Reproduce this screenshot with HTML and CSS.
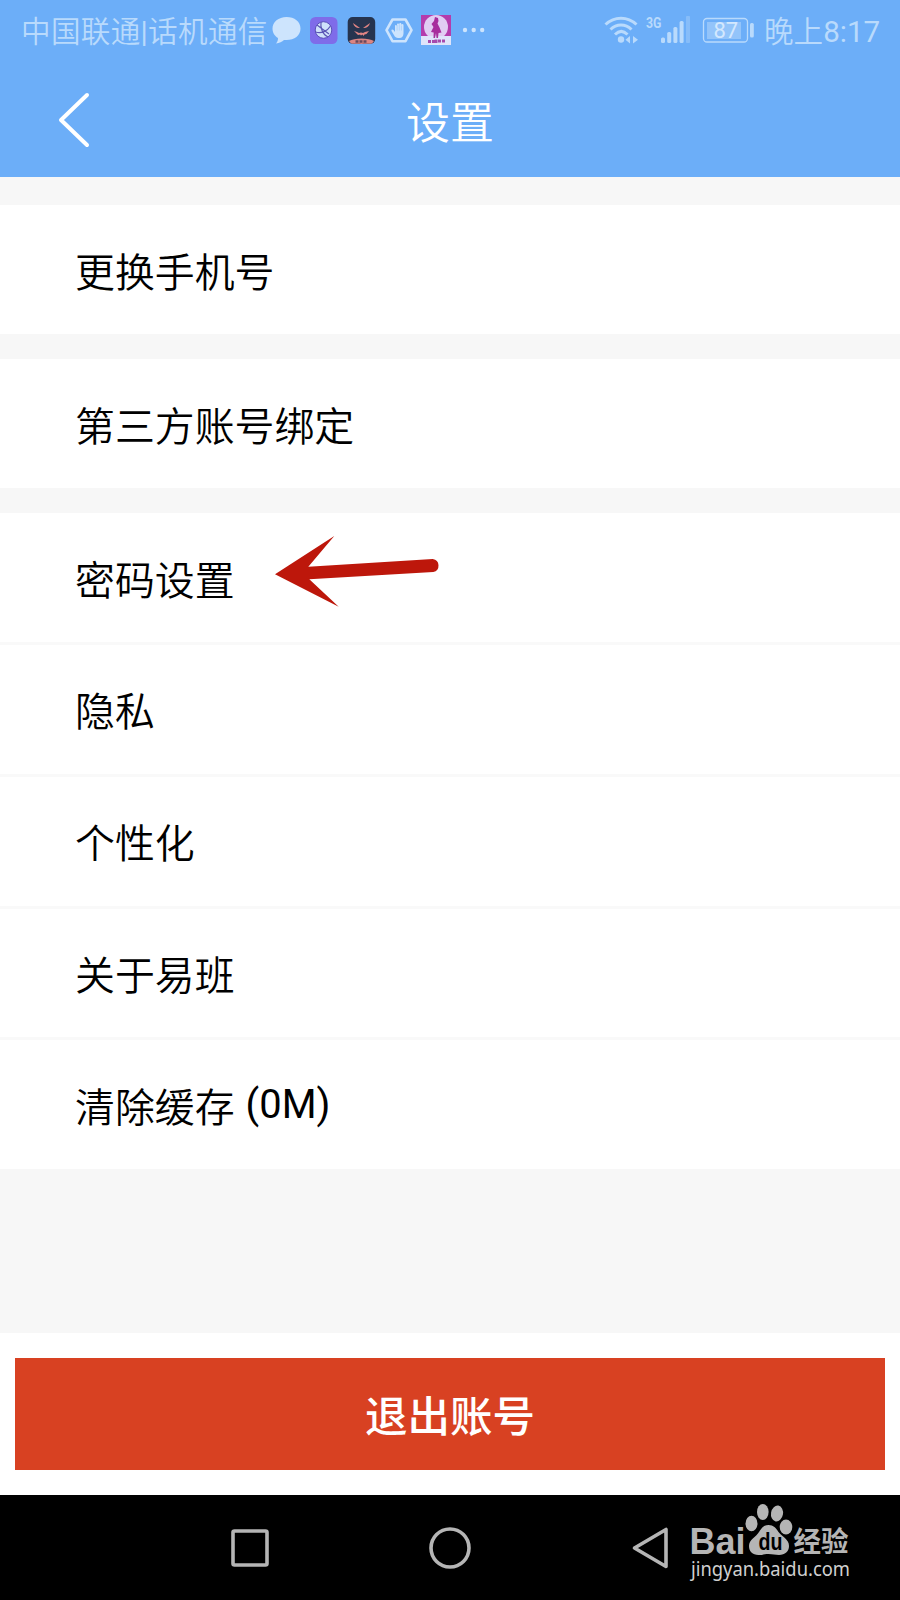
FILE: index.html
```html
<!DOCTYPE html>
<html lang="zh-CN">
<head>
    <meta charset="UTF-8">
    <meta name="viewport" content="width=device-width, initial-scale=1.0">
    <title>设置</title>
    <link rel="stylesheet" href="styles.css">
</head>
<body>

<header class="header">
    <div class="status-bar">
        <span class="carrier">中国联通<span class="latin">|</span>话机通信</span>
        <!-- notification icons -->
        <svg class="notifications" width="216" height="34" viewBox="271 13 216 34">
            <g fill="#cde4fd">
                <path d="M286.500 17c-8 0-14 5-14 11.500 0 4.500 2.300 7.500 5.500 9.500 0 2-.5 4-2 5.500 3.500-.3 6-1.800 8-3.500h2.500c8 0 14-4.500 14-11.500S294.500 17 286.500 17z"/>
                <circle cx="465" cy="30" r="2.200"/>
                <circle cx="473.700" cy="30" r="2.200"/>
                <circle cx="482.200" cy="30" r="2.200"/>
            </g>
            <rect x="310" y="17" width="27.500" height="27" rx="5.500" fill="#7f6ce9"/>
            <circle cx="323.500" cy="30" r="8.300" fill="#cfe0fb" stroke="#5a50b8"/>
            <path d="M321 22c-1 6 2 13 7 15M315.500 32c6 2 12-1 15-6M317 25l12 9" fill="none" stroke="#5b55b5" stroke-width="1.200"/>
            <rect x="347.700" y="17" width="27.500" height="27" rx="5" fill="#26344f"/>
            <path d="M349 41c5-3.500 20-3.500 25 0l-2 2.500c-1 .5-20 .5-21 0z" fill="#dc8583"/>
            <path d="M355.500 41.500h3m1 0h3m1 0h3" stroke="#68485c" stroke-width="2.500"/>
            <path d="M353 23l7 5c-3 .5-6-1-7-5zM370 23l-7 5c3 .5 6-1 7-5zM354 31l3 1 2 1 2-.5 2 .5 2-1 4-1-2.500 3-2 .5-1 1.500-1-1.500-1.500 1-1-1-2 .5z" fill="#e08484"/>
            <path d="M392.500 19.500h13l6 10.700-6 11h-13l-6-11z" fill="none" stroke="#cde4fd" stroke-width="2.600" stroke-linejoin="round"/>
            <path d="M394.800 36.500l-3.300-5.500c-.5-1.500 1-2 2-1l1.500 2v-6c0-1.500 1.800-1.500 2 0v-1.500c0-1.500 2-1.500 2.200 0V24c.2-1.500 2.100-1.500 2.200 0v1c.3-1.300 2-1.200 2.100 0v8.500c0 2.500-1.500 4.500-4 4.500-2 0-3.500-.3-4.700-1.500z" fill="#cde4fd"/>
            <path d="M397.100 25v5.500m2.200-6v6m2.100-5v5" stroke="#8dc1fa" stroke-width=".5"/>
            <path d="M421 15h30v30h-30z" fill="#b43cac"/>
            <circle cx="436" cy="27" r="12" fill="#e1ccf3"/>
            <path d="M421 36h30v9h-30z" fill="#dfe4fa"/>
            <path d="M435 17l3 1 .5 3-1 2.500 2 4 2 5-3 .5-.5 5h-1.500l-.5-5-1 5h-1.500l.2-5.500-2.700-.5 2.500-5-2-3 2.500-3z" fill="#a72d9d"/>
            <path d="M428 41.500h3m1 0h2.500m1.500-2v3.500m2-2h3m1 0h3" stroke="#a64aad" stroke-width="3"/>
        </svg>
        <!-- wifi, signal, battery -->
        <svg class="indicators" width="152" height="34" viewBox="603 13 152 34">
            <g fill="none" stroke="#b9dafc" stroke-width="3">
                <path d="M605.500 24.500c9-8.500 22-8.500 31 0"/>
                <path d="M610.500 29.500c6-6 15-6 21 0"/>
                <path d="M615 34.500c4-4 8.500-4 12.500 0"/>
            </g>
            <g fill="#b9dafc">
                <circle cx="621" cy="39.500" r="3.200"/>
                <path d="M630 36v7.500l-4.500-3.700zM633 36v7.500l5-3.700z"/>
                <rect x="661" y="37.500" width="4" height="5.500" rx="1.500"/>
                <rect x="667.200" y="32" width="4" height="11" rx="1.500"/>
                <rect x="673.400" y="27" width="4" height="16" rx="1.500"/>
                <rect x="679.600" y="21" width="4" height="22" rx="1.500"/>
                <rect x="686" y="16" width="4" height="27" rx="1" opacity=".35"/>
                <rect x="750" y="23" width="3.800" height="14.500" rx="1.500"/>
                <rect x="707" y="22" width="34" height="17" opacity=".5"/>
            </g>
            <rect x="703.500" y="18.500" width="44" height="23.500" rx="3.500" fill="none" stroke="#b9dafc" stroke-width="1.300"/>
            <text class="network" x="646" y="28" textLength="15.500" lengthAdjust="spacingAndGlyphs">3G</text>
            <text class="battery" x="713.500" y="38.300" textLength="24.500">87</text>
        </svg>
        <span class="time">晚上<span class="latin">8:17</span></span>
    </div>
    <div class="title-bar">
        <svg class="back" width="34" height="58" viewBox="0 0 34 58">
            <path d="M30 4L4 29l26 25" fill="none" stroke="#fff" stroke-width="4" stroke-linecap="round" stroke-linejoin="round"/>
        </svg>
        <h1>设置</h1>
    </div>
</header>

<main class="settings">
    <ul class="group">
        <li>更换手机号</li>
    </ul>
    <ul class="group">
        <li>第三方账号绑定</li>
    </ul>
    <ul class="group">
        <li>
            密码设置
            <svg class="arrow" width="168" height="74" viewBox="273 534 168 74">
                <path d="M275 574.300L334.300 536l-26 30.700 124.400-7.700a6.600 6.600 0 0 1 .6 13l-124 7.300 29.400 27.400z" fill="#bd170b"/>
            </svg>
        </li>
        <li>隐私</li>
        <li>个性化</li>
        <li>关于易班</li>
        <li>清除缓存<span class="latin cache-size">(0M)</span></li>
    </ul>
</main>

<div class="footer">
    <button class="logout">退出账号</button>
</div>

<nav class="nav-bar">
    <svg width="44" height="44" viewBox="0 0 44 44"><rect x="5" y="5" width="34" height="34" rx="1.500"/></svg>
    <svg width="44" height="44" viewBox="0 0 44 44"><circle cx="22" cy="22" r="19"/></svg>
    <svg width="44" height="44" viewBox="0 0 44 44"><path d="M6.500 22L38 3.500v37z"/></svg>
    <svg class="watermark" width="170" height="95" viewBox="685 1500 170 95">
        <g fill="#b5b5b5">
            <text class="logo" x="689.500" y="1553.500" textLength="56" lengthAdjust="spacingAndGlyphs">Bai</text>
            <ellipse cx="751.500" cy="1523.500" rx="6" ry="7.700"/>
            <ellipse cx="762.800" cy="1512" rx="5.800" ry="8"/>
            <ellipse cx="777" cy="1513.500" rx="6" ry="8" transform="rotate(10 777 1513.500)"/>
            <ellipse cx="786" cy="1527" rx="6.300" ry="7.500"/>
            <path d="M768.500 1525c5 0 7.500 3 10 7 3 4.500 10.500 7 10.500 14 0 5.500-4 9-10 9-4 0-6-1-10.500-1s-6 1-10 1c-6 0-9.500-3.500-9.500-9 0-6.500 7-9 10-14 2.500-4 4.500-7 9.500-7z"/>
            <text class="logo-du" x="758.500" y="1549.500" textLength="24" lengthAdjust="spacingAndGlyphs">du</text>
            <text class="logo-cn" x="793.500" y="1551.500" textLength="55" lengthAdjust="spacingAndGlyphs">经验</text>
        </g>
        <text class="url" x="691" y="1575.500" textLength="159" lengthAdjust="spacingAndGlyphs">jingyan.baidu.com</text>
    </svg>
</nav>

</body>
</html>
```
FILE: styles.css
```css
* {
    box-sizing: border-box;
}
body {
    margin: 0;
    height: 1600px;
    display: flex;
    flex-direction: column;
    background-color: #f7f7f7;
    color: #000;
    font-family: Roboto, "Noto Sans CJK SC", sans-serif;
}
svg {
    display: block;
    flex: none;
}
.latin {
    font-weight: 400;
}

/* Header */
.header {
    height: 177px;
    background-color: #6caef8;
    color: #fff;
}
.status-bar {
    height: 60px;
    padding: 0 20px 0 21px;
    display: flex;
    align-items: center;
    color: #b9dafc;
    font-size: 29.6px;
    font-weight: 350;
    line-height: 60px;
    white-space: nowrap;
}
.carrier {
    width: 250px;
    padding-top: 3px;
    letter-spacing: 0.3px;
}
.indicators {
    margin-left: auto;
    margin-right: 9px;
}
.network {
    font: bold 15px Roboto, sans-serif;
    fill: #b9dafc;
}
.battery {
    font: 400 22px Roboto, sans-serif;
    fill: #d3e8fe;
}
.time {
    width: 116px;
    padding-top: 3px;
}
.title-bar {
    height: 114px;
    margin-top: 3px;
    padding: 0 57px;
    display: grid;
    grid-template-columns: 34px 1fr 34px;
    align-items: center;
}
.title-bar h1 {
    margin: 0;
    font-size: 44px;
    font-weight: 350;
    text-align: center;
}

/* Settings list */
.settings {
    height: 1156px;
    padding-top: 28px;
}
.group {
    margin: 0 0 25px;
    padding: 0;
    list-style: none;
    background-color: #fff;
}
.group li {
    height: 129px;
    padding: 0 0 1px 75px;
    display: flex;
    align-items: center;
    font-size: 39.9px;
    font-weight: 350;
}
.group li + li {
    height: 131.75px;
    border-top: 3px solid #f9f9f9;
}
.cache-size {
    margin-left: 11px;
}
.arrow {
    margin-left: 38px;
    margin-top: -12px;
}

/* Logout */
.footer {
    height: 162px;
    padding: 25px 15px;
    background-color: #fff;
}
.logout {
    width: 100%;
    height: 112px;
    padding: 0 0 2px;
    border: 0;
    background-color: #d84122;
    color: #fff;
    font-family: inherit;
    font-size: 42.5px;
    font-weight: 500;
}

/* Android nav bar */
.nav-bar {
    position: relative;
    height: 105px;
    padding: 0 228px;
    display: flex;
    align-items: center;
    justify-content: space-between;
    background-color: #000;
    fill: none;
    stroke: #b5b5b5;
    stroke-width: 3.6;
    stroke-linejoin: round;
}
.watermark {
    position: absolute;
    left: 685px;
    top: 5px;
    stroke: none;
}
.logo {
    font: bold 36px "Liberation Sans", sans-serif;
}
.logo-du {
    font: bold 23px "Liberation Sans", sans-serif;
    fill: #000;
}
.logo-cn {
    font: bold 28px "Noto Sans CJK SC", sans-serif;
}
.url {
    font: 20px "Noto Sans", sans-serif;
    fill: #d0d0d0;
}
```
